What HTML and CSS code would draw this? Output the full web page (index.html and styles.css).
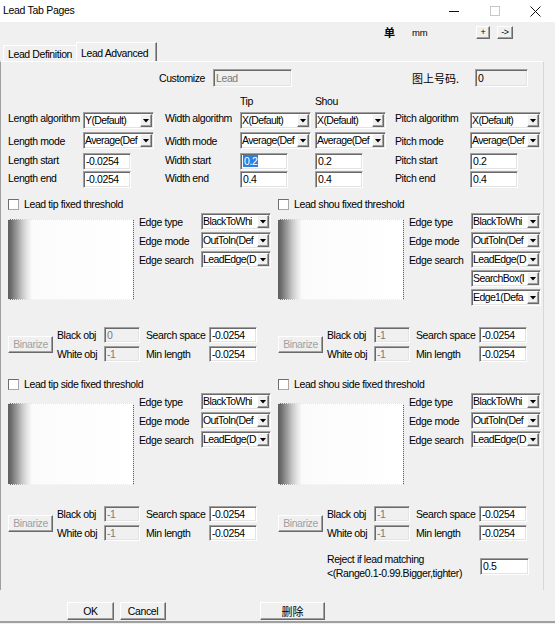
FILE: index.html
```html
<!DOCTYPE html>
<html>
<head>
<meta charset="utf-8">
<link rel="stylesheet" href="styles.css">
</head>
<body>
<div class="titlebar">
  <div class="title">Lead Tab Pages</div>
  <div class="wbtn"><svg width="10" height="10"><path d="M0 5.5H10" stroke="#111"/></svg></div>
  <div class="wbtn"><svg width="10" height="10"><rect x="0.5" y="0.5" width="9" height="9" fill="none" stroke="#c8c8c8"/></svg></div>
  <div class="wbtn close"><svg width="11" height="11"><path d="M0.5 0.5L10.5 10.5M10.5 0.5L0.5 10.5" stroke="#111"/></svg></div>
</div>

<div class="unitbar">
  <span class="unit-cn">单</span>
  <span class="unit">mm</span>
  <span class="mini-btn raised">+</span>
  <span class="mini-btn raised wide">-&gt;</span>
</div>

<div class="tabs">
  <div class="tab">Lead Definition</div>
  <div class="tab active">Lead Advanced</div>
</div>

<div class="panel">
  <div class="cust-row">
    <span class="cust-label">Customize</span>
    <div class="tb sunken disabled w79">Lead</div>
    <span class="cn-label">图上号码.</span>
    <div class="tb sunken readonly w53">0</div>
  </div>

  <div class="head-row"><span class="head-tip">Tip</span><span>Shou</span></div>

  <div class="prow r1">
    <span class="lbl c1">Length algorithm</span>
    <div class="c2"><div class="combo sunken"><span class="val">Y(Default)</span><span class="arr raised"></span></div></div>
    <span class="lbl c3">Width algorithm</span>
    <div class="c4"><div class="combo sunken"><span class="val">X(Default)</span><span class="arr raised"></span></div></div>
    <div class="c5"><div class="combo sunken"><span class="val">X(Default)</span><span class="arr raised"></span></div></div>
    <span class="lbl c6">Pitch algorithm</span>
    <div class="c7"><div class="combo sunken"><span class="val">X(Default)</span><span class="arr raised"></span></div></div>
  </div>
  <div class="prow r2">
    <span class="lbl c1">Length mode</span>
    <div class="c2"><div class="combo sunken"><span class="val">Average(Def</span><span class="arr raised"></span></div></div>
    <span class="lbl c3">Width mode</span>
    <div class="c4"><div class="combo sunken"><span class="val">Average(Def</span><span class="arr raised"></span></div></div>
    <div class="c5"><div class="combo sunken"><span class="val">Average(Def</span><span class="arr raised"></span></div></div>
    <span class="lbl c6">Pitch mode</span>
    <div class="c7"><div class="combo sunken"><span class="val">Average(Def</span><span class="arr raised"></span></div></div>
  </div>
  <div class="prow r3">
    <span class="lbl c1">Length start</span>
    <div class="c2"><div class="tb sunken">-0.0254</div></div>
    <span class="lbl c3">Width start</span>
    <div class="c4"><div class="tb sunken"><span class="selected">0.2</span></div></div>
    <div class="c5"><div class="tb sunken">0.2</div></div>
    <span class="lbl c6">Pitch start</span>
    <div class="c7"><div class="tb sunken">0.2</div></div>
  </div>
  <div class="prow r4">
    <span class="lbl c1">Length end</span>
    <div class="c2"><div class="tb sunken">-0.0254</div></div>
    <span class="lbl c3">Width end</span>
    <div class="c4"><div class="tb sunken">0.4</div></div>
    <div class="c5"><div class="tb sunken">0.4</div></div>
    <span class="lbl c6">Pitch end</span>
    <div class="c7"><div class="tb sunken">0.4</div></div>
  </div>

  <div class="thr thr-a">
    <div class="chk-row"><span class="chk"></span>Lead tip fixed threshold</div>
    <div class="chk-row"><span class="chk"></span>Lead shou fixed threshold</div>

    <div class="thr-body">
      <div class="img"></div>
      <div class="flds">
        <div class="fld"><span class="flbl">Edge type</span><div class="combo sunken w70"><span class="val">BlackToWhi</span><span class="arr raised"></span></div></div>
        <div class="fld"><span class="flbl">Edge mode</span><div class="combo sunken w70"><span class="val">OutToIn(Def</span><span class="arr raised"></span></div></div>
        <div class="fld"><span class="flbl">Edge search</span><div class="combo sunken w70"><span class="val">LeadEdge(D</span><span class="arr raised"></span></div></div>
      </div>
    </div>
    <div class="thr-body">
      <div class="img"></div>
      <div class="flds">
        <div class="fld"><span class="flbl">Edge type</span><div class="combo sunken w70"><span class="val">BlackToWhi</span><span class="arr raised"></span></div></div>
        <div class="fld"><span class="flbl">Edge mode</span><div class="combo sunken w70"><span class="val">OutToIn(Def</span><span class="arr raised"></span></div></div>
        <div class="fld"><span class="flbl">Edge search</span><div class="combo sunken w70"><span class="val">LeadEdge(D</span><span class="arr raised"></span></div></div>
        <div class="fld"><span class="flbl"></span><div class="combo sunken w70"><span class="val">SearchBox(I</span><span class="arr raised"></span></div></div>
        <div class="fld"><span class="flbl"></span><div class="combo sunken w70"><span class="val">Edge1(Defa</span><span class="arr raised"></span></div></div>
      </div>
    </div>

    <div class="bin-row">
      <div class="bin-btn raised">Binarize</div>
      <div class="bin-grid">
        <span>Black obj</span><div class="tb sunken disabled w36">0</div><span>Search space</span><div class="tb sunken">-0.0254</div>
        <span>White obj</span><div class="tb sunken disabled w36">-1</div><span>Min length</span><div class="tb sunken">-0.0254</div>
      </div>
    </div>
    <div class="bin-row">
      <div class="bin-btn raised">Binarize</div>
      <div class="bin-grid">
        <span>Black obj</span><div class="tb sunken disabled w36">-1</div><span>Search space</span><div class="tb sunken">-0.0254</div>
        <span>White obj</span><div class="tb sunken disabled w36">-1</div><span>Min length</span><div class="tb sunken">-0.0254</div>
      </div>
    </div>
  </div>

  <div class="thr thr-b">
    <div class="chk-row"><span class="chk"></span>Lead tip side fixed threshold</div>
    <div class="chk-row"><span class="chk"></span>Lead shou side fixed threshold</div>

    <div class="thr-body">
      <div class="img"></div>
      <div class="flds">
        <div class="fld"><span class="flbl">Edge type</span><div class="combo sunken w70"><span class="val">BlackToWhi</span><span class="arr raised"></span></div></div>
        <div class="fld"><span class="flbl">Edge mode</span><div class="combo sunken w70"><span class="val">OutToIn(Def</span><span class="arr raised"></span></div></div>
        <div class="fld"><span class="flbl">Edge search</span><div class="combo sunken w70"><span class="val">LeadEdge(D</span><span class="arr raised"></span></div></div>
      </div>
    </div>
    <div class="thr-body">
      <div class="img"></div>
      <div class="flds">
        <div class="fld"><span class="flbl">Edge type</span><div class="combo sunken w70"><span class="val">BlackToWhi</span><span class="arr raised"></span></div></div>
        <div class="fld"><span class="flbl">Edge mode</span><div class="combo sunken w70"><span class="val">OutToIn(Def</span><span class="arr raised"></span></div></div>
        <div class="fld"><span class="flbl">Edge search</span><div class="combo sunken w70"><span class="val">LeadEdge(D</span><span class="arr raised"></span></div></div>
      </div>
    </div>

    <div class="bin-row">
      <div class="bin-btn raised">Binarize</div>
      <div class="bin-grid">
        <span>Black obj</span><div class="tb sunken disabled w36">-1</div><span>Search space</span><div class="tb sunken">-0.0254</div>
        <span>White obj</span><div class="tb sunken disabled w36">-1</div><span>Min length</span><div class="tb sunken">-0.0254</div>
      </div>
    </div>
    <div class="bin-row">
      <div class="bin-btn raised">Binarize</div>
      <div class="bin-grid">
        <span>Black obj</span><div class="tb sunken disabled w36">-1</div><span>Search space</span><div class="tb sunken">-0.0254</div>
        <span>White obj</span><div class="tb sunken disabled w36">-1</div><span>Min length</span><div class="tb sunken">-0.0254</div>
      </div>
    </div>
  </div>

  <div class="reject-row">
    <div class="reject-text">Reject if lead matching<br>&lt;(Range0.1-0.99.Bigger,tighter)</div>
    <div class="tb sunken w49">0.5</div>
  </div>
</div>

<div class="footer">
  <div class="btn raised ok">OK</div>
  <div class="btn raised cancel">Cancel</div>
  <div class="btn raised del">删除</div>
</div>
<div class="bottom-line"></div>
</body>
</html>
```

FILE: styles.css
```css
html, body {
  margin: 0;
  padding: 0;
}
body {
  width: 555px;
  height: 624px;
  overflow: hidden;
  background: #f0f0f0;
  font-family: "Liberation Sans", Arial, "Noto Sans CJK SC", sans-serif;
  font-size: 10.5px;
  letter-spacing: -0.4px;
  color: #000;
}

.sunken {
  box-sizing: border-box;
  border: 1px solid;
  border-color: #a0a0a0 #ffffff #ffffff #a0a0a0;
  box-shadow: inset 1px 1px 0 #696969, inset -1px -1px 0 #e3e3e3;
  background: #fff;
}
.raised {
  box-sizing: border-box;
  border: 1px solid;
  border-color: #ffffff #696969 #696969 #ffffff;
  box-shadow: inset -1px -1px 0 #a0a0a0;
  background: #f0f0f0;
}

/* title bar */
.titlebar {
  height: 22px;
  background: #fff;
  display: flex;
  align-items: center;
}
.title {
  flex: 1;
  padding-left: 3px;
  margin-top: -2px;
  font-size: 10.5px;
  letter-spacing: -0.3px;
}
.wbtn {
  width: 41px;
  height: 22px;
  display: flex;
  align-items: center;
  justify-content: center;
}
.wbtn.close { width: 40px; }

/* unit row */
.unitbar {
  height: 20px;
  display: flex;
  align-items: center;
  padding-left: 384px;
}
.unit-cn {
  width: 28px;
  font-family: "Noto Sans CJK SC", sans-serif;
  font-weight: bold;
  font-size: 11px;
  letter-spacing: 0;
}
.unit {
  width: 64px;
  font-size: 9.5px;
  letter-spacing: -0.2px;
}
.mini-btn {
  width: 14px;
  height: 13px;
  font-size: 9px;
  line-height: 11px;
  text-align: center;
  letter-spacing: -0.5px;
}
.mini-btn.wide {
  width: 16px;
  margin-left: 7px;
}

/* tabs */
.tabs {
  height: 19px;
  display: flex;
  align-items: flex-end;
}
.tab {
  box-sizing: border-box;
  height: 16px;
  width: 73px;
  margin-left: 3px;
  padding: 2px 0 0 4px;
  line-height: 13px;
  border-top: 1px solid #fff;
  border-left: 1px solid #fff;
}
.tab.active {
  height: 19px;
  width: 81px;
  margin-left: 0;
  padding: 3px 0 0 4px;
  line-height: 14px;
  border-right: 1px solid #696969;
  box-shadow: inset -1px 0 0 #a0a0a0;
}

/* panel */
.panel {
  box-sizing: border-box;
  width: 544px;
  height: 529px;
  border-top: 1px solid #fff;
  border-left: 1px solid #a0a0a0;
  border-right: 1px solid #d8d8d8;
  padding: 7px 0 0 7px;
}

.tb {
  width: 48px;
  height: 17px;
  padding-left: 2px;
  line-height: 15px;
  white-space: nowrap;
  overflow: hidden;
}
.tb.disabled {
  background: #f0f0f0;
  color: #7a7a7a;
}
.tb.readonly { background: #f0f0f0; }
.w79 { width: 79px; height: 18px; line-height: 16px; }
.w53 { width: 53px; height: 18px; line-height: 16px; }
.w36 { width: 36px; height: 16px; line-height: 14px; }
.w49 { width: 49px; }

.selected {
  background: #2f7fe0;
  color: #fff;
  padding: 0 1px;
}

.cust-row {
  display: flex;
  align-items: center;
  height: 18px;
}
.cust-label {
  margin-left: 151px;
  width: 54px;
}
.cn-label {
  margin-left: 120px;
  width: 63px;
  font-family: "Noto Sans CJK SC", sans-serif;
  font-size: 11px;
  letter-spacing: 0;
}

.head-row {
  display: flex;
  height: 13px;
  line-height: 13px;
  margin-top: 8px;
}
.head-tip {
  margin-left: 232px;
  width: 75px;
}

/* parameter rows */
.prow {
  display: flex;
  align-items: flex-start;
  height: 17px;
}
.prow .lbl { line-height: 12px; }
.r1 { margin-top: 4px; }
.r2 { margin-top: 3px; }
.r2 .lbl { padding-top: 3px; }
.r3 { margin-top: 4px; }
.r3 .lbl { padding-top: 1px; }
.r4 { margin-top: 1px; }
.r4 .lbl { padding-top: 1px; }
.c1 { width: 75px; }
.c2 { width: 82px; }
.c3 { width: 75px; }
.c4 { width: 75px; }
.c5 { width: 80px; }
.c6 { width: 75px; }
.c7 { width: 72px; }

.combo {
  width: 71px;
  height: 17px;
  display: flex;
  align-items: center;
  overflow: hidden;
}
.combo.w70 { width: 70px; }
.combo .val {
  flex: 1;
  min-width: 0;
  padding-left: 1px;
  white-space: nowrap;
  overflow: hidden;
  line-height: 15px;
  letter-spacing: -0.6px;
}
.combo .arr {
  flex: none;
  width: 12px;
  height: 13px;
  margin-right: 1px;
  display: flex;
  align-items: center;
  justify-content: center;
}
.combo .arr::after {
  content: "";
  width: 7px;
  height: 4px;
  background: #000;
  clip-path: polygon(0 0, 100% 0, 50% 100%);
}

/* threshold sections */
.thr {
  display: grid;
  grid-template-columns: 270px 265px;
}
.thr-a { margin-top: 10px; }
.thr-b { margin-top: 16px; }

.chk-row {
  display: flex;
  align-items: center;
  height: 12px;
}
.chk {
  box-sizing: border-box;
  width: 11px;
  height: 11px;
  margin-right: 5px;
  background: #fff;
  border: 1px solid;
  border-color: #6d6d6d #a8a8a8 #a8a8a8 #6d6d6d;
}

.thr-body {
  display: flex;
  align-items: flex-start;
  margin-top: 3px;
}
.img {
  box-sizing: border-box;
  width: 126px;
  height: 81px;
  margin-top: 6px;
  background: linear-gradient(to right, #5e5e5e 0, #6c6c6c 3px, #858585 6px, #a4a4a4 10px, #c6c6c6 14px, #e4e4e4 19px, #fbfbfb 24px, #fff 100%);
  border-top: 1px dotted #e2e2e2;
  border-right: 1px dotted #e2e2e2;
  border-bottom: 1px dotted #ececec;
}
.thr-b .img {
  margin-top: 10px;
  height: 82px;
}
.flds {
  margin-left: 5px;
}
.fld {
  display: flex;
  align-items: center;
  height: 17px;
  margin-bottom: 2px;
}
.fld:last-child { margin-bottom: 0; }
.flbl { width: 62px; }

.bin-row {
  display: flex;
  align-items: center;
  margin-top: 21px;
}
.bin-btn {
  width: 45px;
  height: 17px;
  margin-right: 4px;
  color: #a0a0a0;
  text-align: center;
  line-height: 15px;
}
.bin-grid {
  display: grid;
  grid-template-columns: 47px 42px 63px 48px;
  grid-template-rows: 16px 16px;
  row-gap: 3px;
  align-items: center;
}
.bin-grid .tb {
  height: 16px;
  line-height: 14px;
}

.reject-row {
  display: flex;
  align-items: center;
  height: 27px;
  margin-top: 12px;
}
.reject-text {
  margin-left: 319px;
  width: 153px;
  line-height: 13.5px;
}

/* footer */
.footer {
  display: flex;
  height: 18px;
  margin-top: 12px;
}
.btn {
  height: 18px;
  text-align: center;
  line-height: 16px;
}
.ok { margin-left: 67px; width: 47px; }
.cancel { margin-left: 6px; width: 46px; }
.del {
  margin-left: 94px;
  width: 65px;
  font-family: "Noto Sans CJK SC", sans-serif;
  font-size: 11px;
  letter-spacing: 0;
}
.bottom-line {
  height: 2px;
  margin-top: 1px;
  background: #a0a0a0;
}
```
